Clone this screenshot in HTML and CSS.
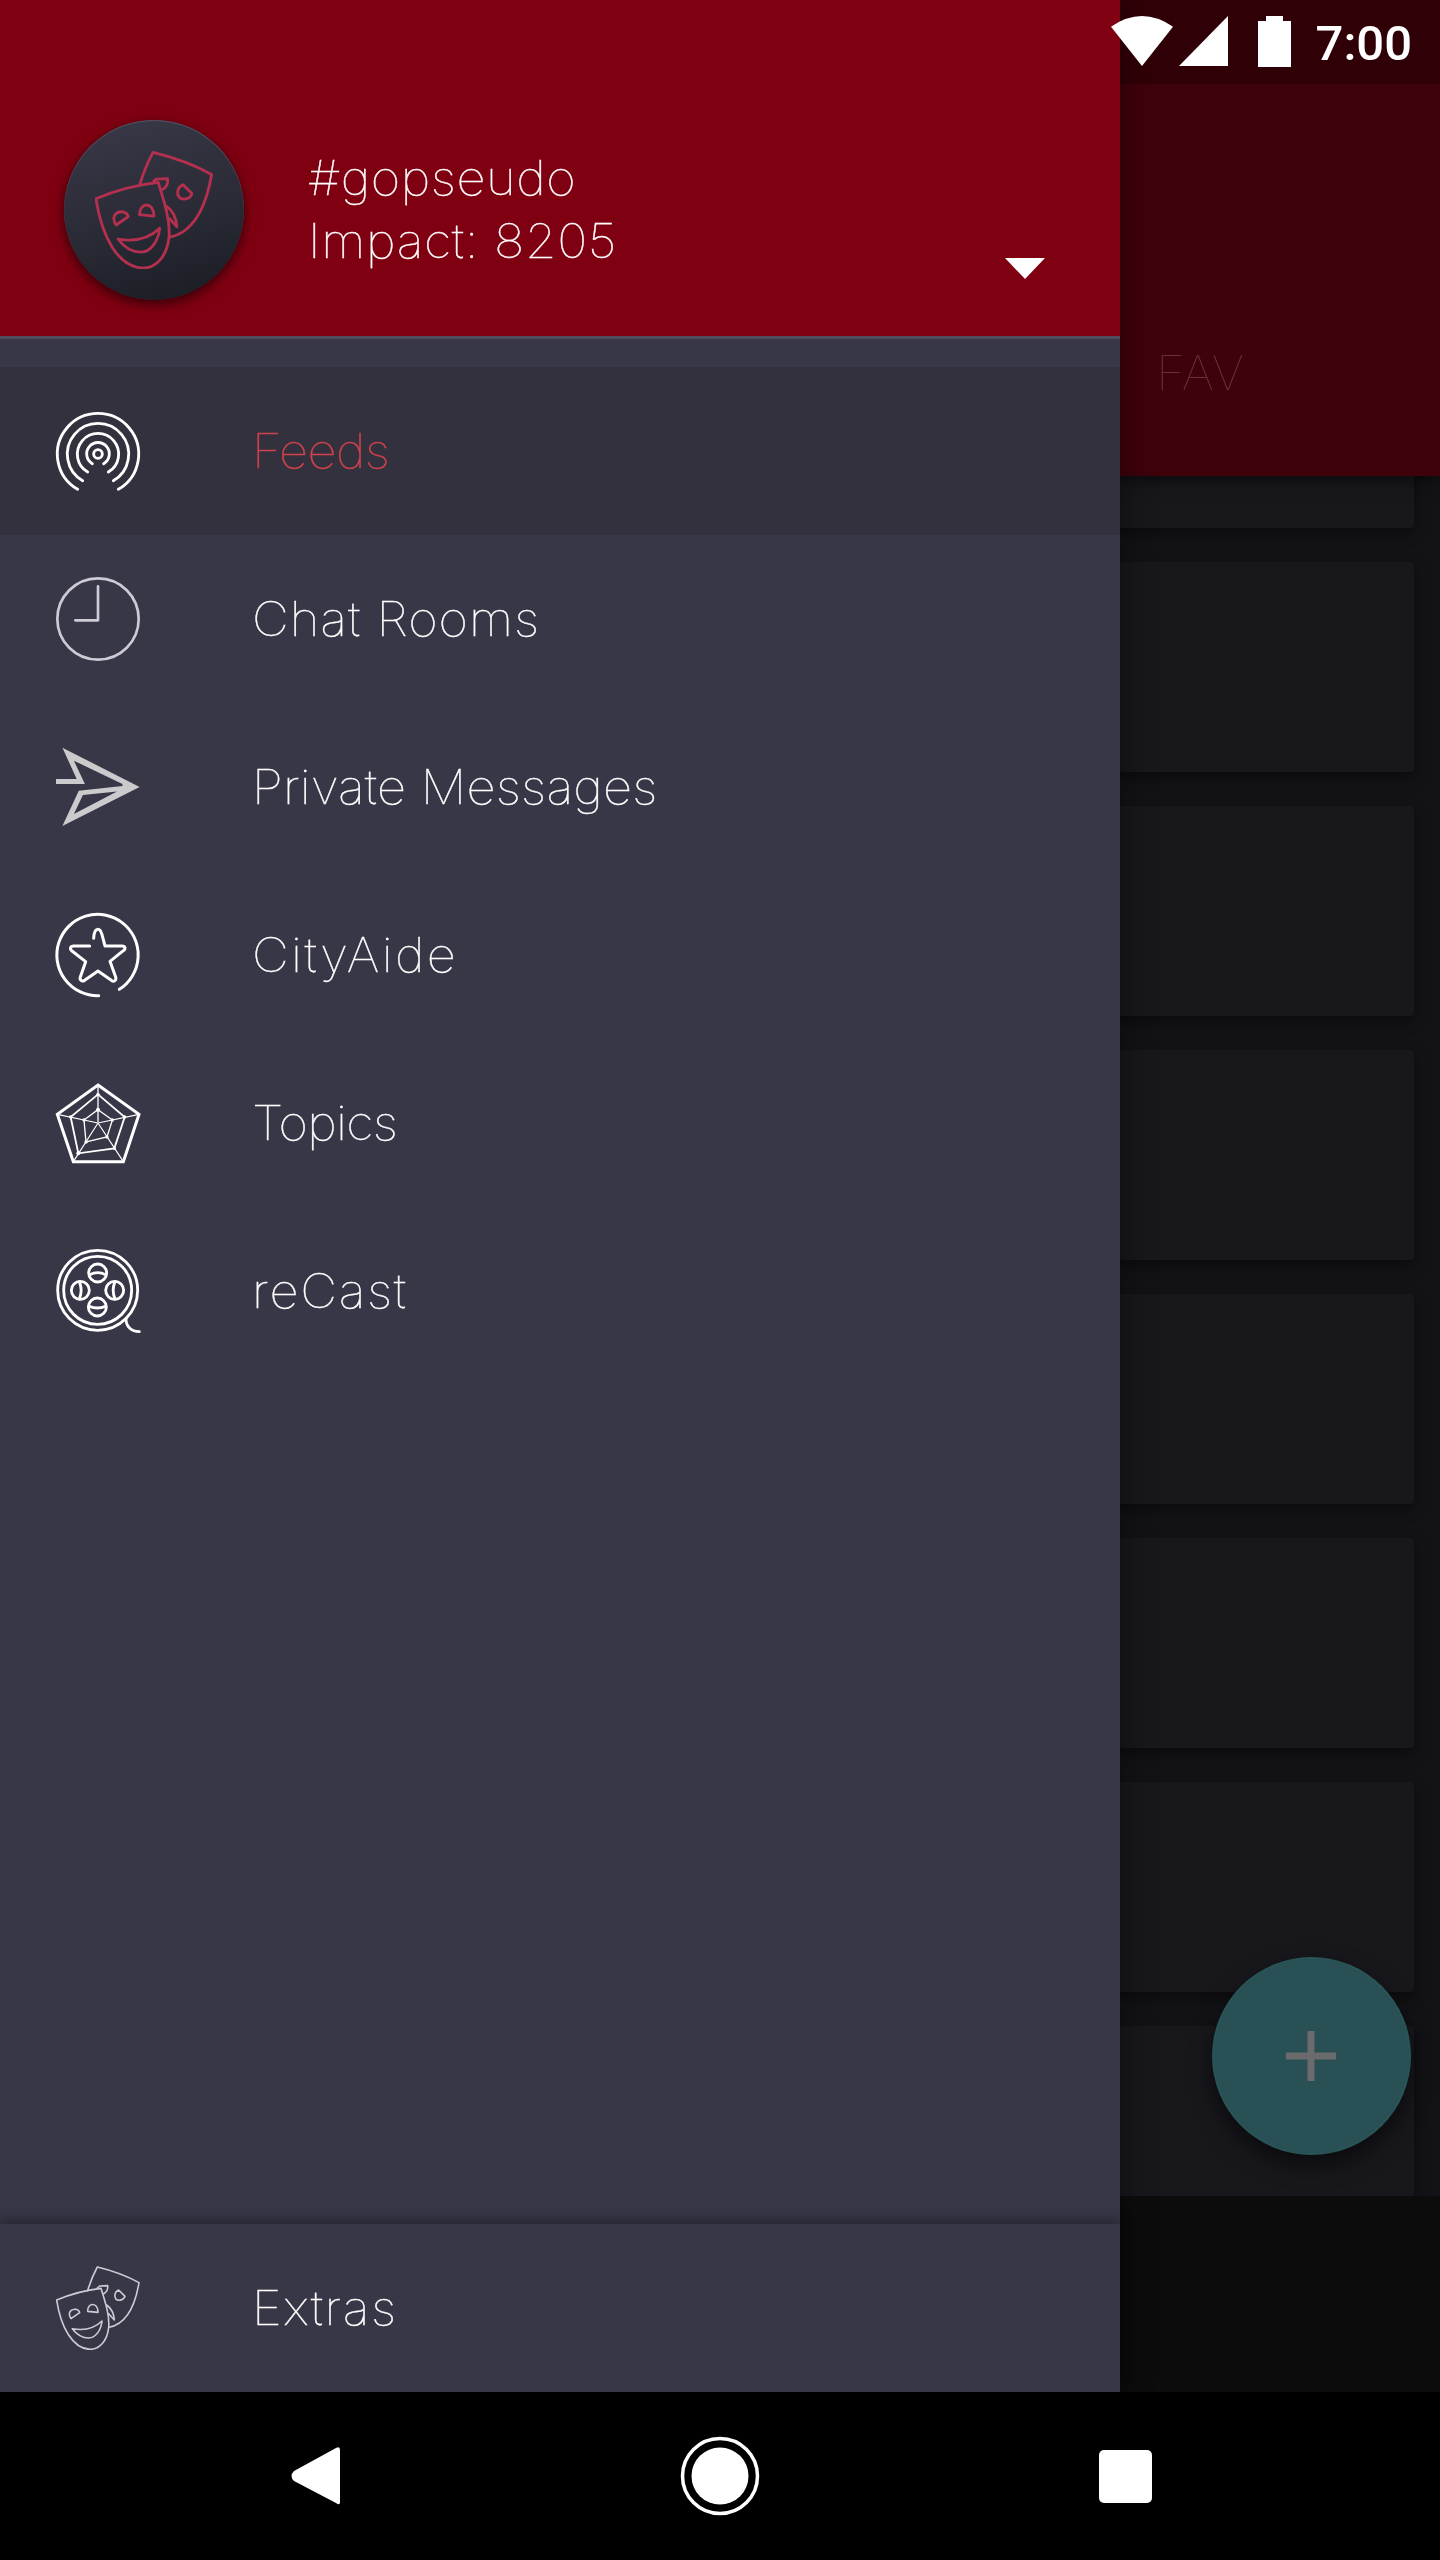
FILE: index.html
```html
<!DOCTYPE html>
<html lang="en">
<head>
    <meta charset="UTF-8">
    <meta name="viewport" content="width=device-width, initial-scale=1.0">
    <title>Pseudo</title>
    <link rel="stylesheet" href="styles.css">
</head>
<body>
    <svg width="0" height="0" class="defs">
        <symbol id="masks" viewBox="0 0 252 252">
            <path d="M95 74Q106 36 124 3Q195 20 249 50C242 92 222 172 159 184"/>
            <path d="M2 102Q65 75 135 67C150 115 161 150 158 184C154 225 130 250 102 250C50 248 15 185 2 102Z"/>
            <path d="M45 158C34 140 44 128 60 130Q70 133 71 140Z"/>
            <path d="M95 136C95 108 126 108 126 139Z"/>
            <path d="M49 188Q104 198 138 165C136 190 120 216 98 216C75 216 58 200 49 188Z"/>
            <path d="M124 66L131 60L155 59Q157 76 143 83"/>
            <path d="M188 72L207 91C203 104 185 106 179 98C173 88 178 76 188 72Z"/>
            <path d="M152 117Q173 132 175 162L158 143"/>
        </symbol>
    </svg>

    <div class="phone">
        <main class="app">
            <header class="toolbar">
                <span class="tab">FAV</span>
            </header>
            <div class="feed">
                <div class="card"></div>
                <div class="card"></div>
                <div class="card"></div>
                <div class="card"></div>
                <div class="card"></div>
                <div class="card"></div>
                <div class="card"></div>
                <div class="card"></div>
            </div>
            <div class="bottom-strip"></div>
            <button class="fab" aria-label="Add">
                <svg width="50" height="50" viewBox="0 0 50 50"><path d="M25 0V50M0 25H50"/></svg>
            </button>
        </main>

        <aside class="drawer">
            <div class="profile">
                <div class="avatar">
                    <svg class="masks" width="118" height="118"><use href="#masks"/></svg>
                </div>
                <div class="profile-text">
                    <div class="handle">#gopseudo</div>
                    <div class="impact">Impact: 8205</div>
                </div>
                <div class="caret"></div>
            </div>

            <nav class="menu">
                <a class="item active">
                    <svg class="icon" viewBox="0 0 252 252">
                        <g stroke-width="8.5">
                            <circle cx="126" cy="135" r="13"/>
                            <path d="M109 164A34 34 0 1 1 143 164"/>
                            <path d="M95 189A62 62 0 1 1 157 189"/>
                            <path d="M80 215A92 92 0 1 1 172 215"/>
                            <path d="M65 241A122 122 0 1 1 187 241"/>
                        </g>
                    </svg>
                    <span class="label">Feeds</span>
                </a>
                <a class="item">
                    <svg class="icon dim" viewBox="0 0 252 252">
                        <g stroke-width="8">
                            <circle cx="126" cy="126" r="122"/>
                            <path d="M126 28V130H58"/>
                        </g>
                    </svg>
                    <span class="label chat">Chat Rooms</span>
                </a>
                <a class="item">
                    <svg class="icon send" viewBox="0 0 84 84">
                        <path d="M0 34H20.7L6.4 2.7L83.6 42L6.4 81L22.8 45.7L66.5 41L66.4 39L17.9 15.7L28.9 39H0ZM17.9 69L61 46.5L26.9 50Z"/>
                    </svg>
                    <span class="label">Private Messages</span>
                </a>
                <a class="item">
                    <svg class="icon" viewBox="0 0 252 252">
                        <g stroke-width="9">
                            <path d="M128 248A122 122 0 1 1 190 229"/>
                            <path d="M113 76C114 60 119 49 126 49C133 49 136 58 138 65L147 99H198C208 99 210 108 202 113L162 145L179 192C182 202 174 208 166 202L126 174L86 202C77 207 70 201 73 192L89 146L48 114C40 108 43 99 53 99H101"/>
                        </g>
                    </svg>
                    <span class="label city">CityAide</span>
                </a>
                <a class="item">
                    <svg class="icon sharp" viewBox="0 0 252 252">
                        <path d="M4 100L126 126L249 100M52 242L126 126L202 242" stroke-width="3.5"/>
                        <path d="M126 12V126" stroke="#b9b8c2" stroke-width="6"/>
                        <path d="M126 12L249 100L202 242H52L4 100Z" stroke-width="9"/>
                        <path d="M126 40L206 108L175 202L67 217L44 108Z" stroke-width="5.5"/>
                        <path d="M126 86L169 117L153 168L90 183L84 117Z" stroke-width="4"/>
                        <g class="dots">
                            <circle cx="126" cy="40" r="5"/>
                            <circle cx="206" cy="108" r="5"/>
                            <circle cx="175" cy="202" r="5"/>
                            <circle cx="67" cy="217" r="6"/>
                            <circle cx="44" cy="108" r="5"/>
                            <circle cx="126" cy="86" r="6"/>
                            <circle cx="169" cy="117" r="5"/>
                            <circle cx="153" cy="168" r="5"/>
                            <circle cx="90" cy="183" r="5"/>
                            <circle cx="84" cy="117" r="5"/>
                        </g>
                    </svg>
                    <span class="label topics">Topics</span>
                </a>
                <a class="item">
                    <svg class="icon" viewBox="0 0 252 252">
                        <g stroke-width="8.5">
                            <circle cx="125" cy="124" r="120"/>
                            <circle cx="125" cy="124" r="102"/>
                            <circle cx="125" cy="72" r="27"/>
                            <circle cx="73" cy="124" r="27"/>
                            <circle cx="176" cy="124" r="27"/>
                            <circle cx="124" cy="174" r="27"/>
                            <path d="M101 77Q125 65 149 77M100 172Q124 182 148 172M70 98Q81 124 70 150M177 98Q166 124 177 150"/>
                            <path d="M210 208C209 232 226 248 250 248"/>
                        </g>
                    </svg>
                    <span class="label recast">reCast</span>
                </a>
            </nav>

            <a class="item extras">
                <svg class="icon masks dim"><use href="#masks"/></svg>
                <span class="label">Extras</span>
            </a>
        </aside>

        <div class="status-bar">
            <svg width="180" height="50" viewBox="0 0 180 50" fill="#fff">
                <path d="M0 7Q31 -11 62 7L31 40Z" transform="matrix(1 0 0 1.19 0 1.3)"/>
                <path d="M117 -1V49H68Z"/>
                <path d="M147 4H155V-1H172V4H180V50H147Z"/>
            </svg>
            <span class="time">7:00</span>
        </div>

        <footer class="nav-bar">
            <svg width="50" height="58" viewBox="0 0 50 58"><path d="M45 1Q49 -1 49 3V55Q49 59 45 56L3 34Q-2 29 3 24Z"/></svg>
            <svg width="80" height="80" viewBox="0 0 80 80">
                <circle cx="40" cy="40" r="28.5"/>
                <circle cx="40" cy="40" r="37.5" fill="none" stroke="#fff" stroke-width="3.5"/>
            </svg>
            <div class="recents"></div>
        </footer>
    </div>
</body>
</html>
```
FILE: styles.css
```css
* {
    box-sizing: border-box;
}

body {
    margin: 0;
    background: #000;
    color: #fff;
    font-family: Inter, sans-serif;
    font-weight: 100;
}

.defs {
    position: absolute;
}

.phone {
    position: relative;
    display: flex;
    flex-direction: column;
    width: 1440px;
    height: 2560px;
    overflow: hidden;
}

/* screen behind the drawer */
.app {
    position: relative;
    z-index: 0;
    display: flex;
    flex-direction: column;
    height: 2392px;
    background: #131317;
}

.toolbar {
    position: relative;
    z-index: 1;
    display: flex;
    align-items: flex-end;
    height: 476px;
    padding: 0 0 74px 1156px;
    background: #3e020b;
    border-top: 84px solid #300007;
    box-shadow: 0 4px 14px rgba(0, 0, 0, 0.5);
}

.tab {
    color: #65323a;
    font-size: 47px;
    line-height: 58px;
    letter-spacing: 1px;
    transform: scaleX(1.07);
    transform-origin: left;
}

/* list is scrolled, so the first card starts under the toolbar */
.feed {
    display: flex;
    flex: none;
    flex-direction: column;
    gap: 34px;
    height: 1878px;
    margin-top: -158px;
    padding: 0 26px;
    overflow: hidden;
}

.card {
    flex: none;
    height: 210px;
    background: #17171c;
    border-radius: 4px;
    box-shadow: 0 6px 14px rgba(0, 0, 0, 0.4);
}

.bottom-strip {
    flex: 1;
    background: #0c0c0d;
}

.fab {
    position: absolute;
    left: 1212px;
    top: 1957px;
    display: flex;
    align-items: center;
    justify-content: center;
    width: 199px;
    height: 198px;
    padding: 0 2px 1px 0;
    border: 2px solid #2a5458;
    border-radius: 50%;
    background: #285055;
    box-shadow: 0 10px 22px rgba(0, 0, 0, 0.5);
}

.fab svg {
    stroke: #6b6b6b;
    stroke-width: 7;
}

/* drawer */
.drawer {
    position: absolute;
    left: 0;
    top: 0;
    display: flex;
    flex-direction: column;
    width: 1120px;
    height: 2392px;
    background: #383748;
    box-shadow: 0 0 32px rgba(0, 0, 0, 0.4);
}

.profile {
    display: flex;
    align-items: flex-start;
    height: 339px;
    padding: 120px 75px 0 64px;
    background: #7f0011;
    border-bottom: 3px solid #504d61;
}

.avatar {
    display: flex;
    align-items: center;
    justify-content: center;
    width: 180px;
    height: 180px;
    border-radius: 50%;
    background: linear-gradient(165deg, #3a3949 0%, #2b2c37 50%, #191c23 100%);
    box-shadow: 0 4px 12px rgba(0, 0, 0, 0.6), inset 0 1px 1px #555263;
}

.avatar .masks {
    stroke: #b5304f;
    stroke-width: 6;
}

.profile-text {
    flex: 1;
    padding: 26px 0 0 64px;
    font-size: 47.5px;
    line-height: 63px;
    -webkit-text-stroke: 0.4px #fff;
}

.handle,
.impact,
.label {
    transform: scaleX(1.07);
    transform-origin: left;
}

.handle {
    letter-spacing: 0.5px;
}

.impact {
    letter-spacing: 0.6px;
}

.caret {
    margin-top: 138px;
    border: 20px solid transparent;
    border-top: 21px solid #fff;
    border-bottom: 0;
}

.menu {
    flex: 1;
    padding-top: 28px;
}

.item {
    display: flex;
    align-items: center;
    height: 168px;
    padding-left: 56px;
}

.active {
    background: #33313e;
}

.icon {
    width: 84px;
    height: 84px;
    overflow: visible;
    fill: none;
    stroke: #fff;
    stroke-linecap: round;
    stroke-linejoin: round;
}

.dim {
    stroke: #cdccd6;
}

.sharp {
    stroke-linejoin: miter;
    stroke-linecap: butt;
}

.send {
    fill: #cbcbcd;
    stroke: none;
}

.dots {
    fill: #fff;
    stroke: none;
}

.masks {
    fill: none;
    stroke-width: 4.8;
    stroke-linejoin: round;
}

.label {
    margin-left: 112px;
    padding-bottom: 1px;
    font-size: 47.5px;
    letter-spacing: 0.2px;
    -webkit-text-stroke: 0.4px currentColor;
}

.active .label {
    color: #d1434c;
    letter-spacing: -0.6px;
}

.label.chat {
    letter-spacing: 0.9px;
}

.label.city {
    letter-spacing: 2.2px;
}

.label.topics {
    letter-spacing: -0.7px;
}

.label.recast {
    letter-spacing: 1.6px;
}

.extras {
    box-shadow: 0 -4px 12px rgba(0, 0, 0, 0.35);
}

.extras .label {
    letter-spacing: 1.5px;
}

/* system bars */
.status-bar {
    position: absolute;
    right: 28px;
    top: 0;
    display: flex;
    align-items: flex-start;
    height: 84px;
    padding-top: 17px;
}

.status-bar svg {
    overflow: visible;
}

.time {
    margin-top: -1px;
    margin-left: 25px;
    font-family: Roboto, sans-serif;
    font-size: 49px;
    font-weight: 500;
    line-height: 56px;
}

.nav-bar {
    display: flex;
    align-items: center;
    justify-content: space-between;
    height: 168px;
    padding: 0 288px 0 291px;
    background: #000;
    fill: #fff;
}

.recents {
    width: 53px;
    height: 53px;
    border-radius: 5px;
    background: #fff;
}
```
